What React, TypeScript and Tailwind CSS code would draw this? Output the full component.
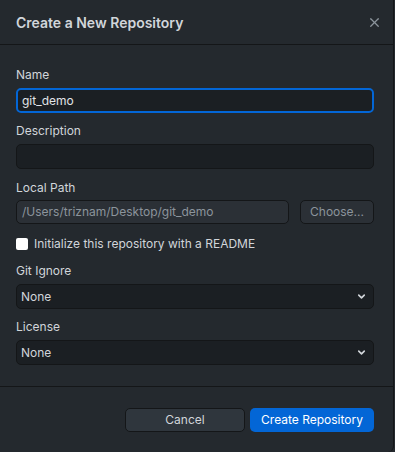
import { ChevronDown, X } from 'lucide-react';

const font = { fontFamily: 'Inter, "Noto Sans", sans-serif' };

function Label({ children }: { children: React.ReactNode }) {
  return <div className="h-4 text-[12px] leading-4 text-[#d1d5da]">{children}</div>;
}

function Select({ value }: { value: string }) {
  return (
    <div className="mt-[5px] h-[25px] rounded-[5px] border border-[#141618] bg-[#1b1f23] flex items-center justify-between pl-[4px] pr-[6px]">
      <span className="text-[12px] text-[#d1d5da]">{value}</span>
      <ChevronDown className="w-[11px] h-[11px] text-[#d1d5da]" strokeWidth={3.5} />
    </div>
  );
}

export default function App() {
  return (
    <div className="w-[395px] h-[452px] bg-[#24292e]" style={font}>
      <div className="w-[394px] h-[452px] flex flex-col border-r border-[#141618] rounded-br-[6px] antialiased">
        {/* header */}
        <div className="h-[45px] flex-shrink-0 flex items-center justify-between pl-4 pr-[11px] border-b border-[#141618]">
          <h1 className="text-[14px] font-semibold text-[#d1d5da]">Create a New Repository</h1>
          <X className="w-[15px] h-[15px] text-[#8c949c]" strokeWidth={2} />
        </div>

        {/* body */}
        <div className="flex-1 pl-4 pr-[19px] pt-[22px]">
          <Label>Name</Label>
          <div className="mt-[5px] h-[25px] rounded-[5px] border-2 border-[#0366d6] bg-[#1b1f23] flex items-center px-[4px]">
            <span className="text-[12px] text-[#e1e4e8]">git_demo</span>
          </div>

          <div className="mt-[10px]">
            <Label>Description</Label>
            <div className="mt-[5px] h-[25px] rounded-[5px] border border-[#141618] bg-[#1b1f23]" />
          </div>

          <div className="mt-[11px]">
            <Label>Local Path</Label>
            <div className="mt-[4px] flex gap-[11px]">
              <div className="flex-1 h-[24px] rounded-[5px] border border-[#141618] bg-[#2b3036] flex items-center px-[5px]">
                <span className="text-[12px] text-[#8c949c]">/Users/triznam/Desktop/git_demo</span>
              </div>
              <div className="w-[74px] h-[24px] rounded-[5px] border border-[#141618] bg-[#2b3036] flex items-center justify-center">
                <span className="text-[12px] text-[#8c949c]">Choose...</span>
              </div>
            </div>
          </div>

          <div className="mt-[12px] h-4 flex items-center gap-[6px]">
            <div className="w-[12px] h-[12px] rounded-[2px] bg-white" />
            <span className="text-[12px] text-[#d1d5da]">Initialize this repository with a README</span>
          </div>

          <div className="mt-[11px]">
            <Label>Git Ignore</Label>
            <Select value="None" />
          </div>

          <div className="mt-[10px]">
            <Label>License</Label>
            <Select value="None" />
          </div>
        </div>

        {/* footer */}
        <div className="h-[66px] flex-shrink-0 border-t border-[#141618] flex items-center justify-end gap-[5px] pr-[19px] pt-[1px]">
          <button className="w-[120px] h-[24px] rounded-[5px] border border-[#141618] bg-[#2f363d] text-[12px] text-[#d1d5da]">
            Cancel
          </button>
          <button className="w-[124px] h-[24px] rounded-[5px] bg-[#0366d6] text-[12px] text-white">
            Create Repository
          </button>
        </div>
      </div>
    </div>
  );
}
